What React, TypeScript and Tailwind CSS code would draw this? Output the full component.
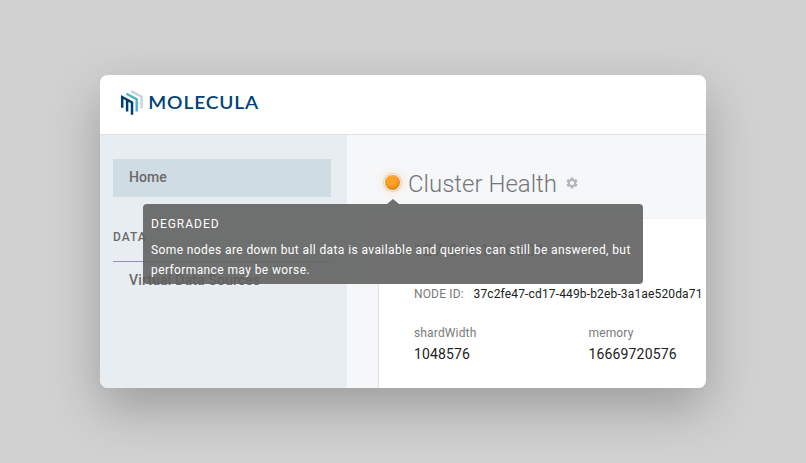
function Logo() {
  return (
    <svg width="140" height="28" viewBox="0 0 140 28" aria-label="Molecula">
      <g fill="none" strokeWidth="2.4">
        <path d="M11.3 2.1 L21.6 7.6 V19.4" stroke="#c5d3dc" />
        <path d="M6.4 4.8 L16.7 10.2 V22.6" stroke="#4ab3c8" />
        <path d="M2.2 18.8 V8 L12 13.4 V25.7 M7.1 10.7 V22.4" stroke="#003d73" strokeWidth="2.5" />
      </g>
      <text
        x="28.3"
        y="20.2"
        textLength="110.8"
        lengthAdjust="spacingAndGlyphs"
        className="fill-[#00427a] font-['Lato',sans-serif] text-[18px] font-semibold tracking-[0.8px]"
      >
        MOLECULA
      </text>
    </svg>
  );
}

function Gear() {
  return (
    <svg width="14" height="14" viewBox="0 0 24 24" fill="#b4b6b8">
      <path d="M19.14 12.94c.04-.3.06-.61.06-.94 0-.32-.02-.64-.07-.94l2.03-1.58c.18-.14.23-.41.12-.61l-1.92-3.32c-.12-.22-.37-.29-.59-.22l-2.39.96c-.5-.38-1.03-.7-1.62-.94L14.4 2.81c-.04-.24-.24-.41-.48-.41h-3.84c-.24 0-.43.17-.47.41l-.36 2.54c-.59.24-1.13.57-1.62.94l-2.39-.96c-.22-.08-.47 0-.59.22L2.74 8.87c-.12.21-.08.47.12.61l2.03 1.58c-.05.3-.09.63-.09.94s.02.64.07.94l-2.03 1.58c-.18.14-.23.41-.12.61l1.92 3.32c.12.22.37.29.59.22l2.39-.96c.5.38 1.03.7 1.62.94l.36 2.54c.05.24.24.41.48.41h3.84c.24 0 .44-.17.47-.41l.36-2.54c.59-.24 1.13-.56 1.62-.94l2.39.96c.22.08.47 0 .59-.22l1.92-3.32c.12-.22.07-.47-.12-.61l-2.01-1.58zM12 15.6c-1.98 0-3.6-1.62-3.6-3.6s1.62-3.6 3.6-3.6 3.6 1.62 3.6 3.6-1.62 3.6-3.6 3.6z" />
    </svg>
  );
}

function Stat({ label, value }: { label: string; value: string }) {
  return (
    <div className="w-[174.5px] shrink-0">
      <div className="text-xs leading-5 tracking-[0.15px] text-[#7a7a7a]">{label}</div>
      <div className="mt-px text-sm leading-5 tracking-[0.15px] text-[#212121]">{value}</div>
    </div>
  );
}

function Tooltip() {
  return (
    <div className="absolute top-[129px] left-[43px] h-20 w-[500px] rounded bg-[#616161]/90 px-2 pt-2.5 text-xs leading-5 text-white">
      <div className="absolute -top-[5px] left-[244px] h-[5px] w-3 bg-[#616161]/90 [clip-path:polygon(50%_0,100%_100%,0_100%)]" />
      <div className="tracking-[1px]">DEGRADED</div>
      <div className="mt-1.5 tracking-[0.4px]">
        Some nodes are down but all data is available and queries can still be answered, but
        <br />
        performance may be worse.
      </div>
    </div>
  );
}

export default function App() {
  return (
    <div className="flex h-[463px] w-[806px] items-start overflow-hidden bg-[#d1d1d1] pt-[75px] pl-[100px] font-['Roboto',sans-serif]">
      <div className="relative h-[313px] w-[606px] rounded-lg shadow-[0_20px_50px_rgba(0,0,0,0.25)]">
        <div className="flex h-full flex-col overflow-hidden rounded-lg bg-white">
          <header className="h-[60px] shrink-0 border-b border-[#dfe1e3] pt-[14px] pl-5">
            <Logo />
          </header>
          <div className="flex min-h-0 flex-1">
            <aside className="w-[247px] shrink-0 bg-[#e8edf1] px-[13px] pt-6 text-[#6a6a6a]">
              <div className="mr-[3px] h-[38px] bg-[#d0dce4] pl-4 text-sm leading-9 font-medium tracking-[0.1px]">
                Home
              </div>
              <div className="mt-[30px] mr-[3px] h-[35px] border-b border-[#47b5c8] text-xs leading-5 font-medium tracking-[1px]">
                DATA
              </div>
              <div className="pt-2 pl-4 text-sm leading-5 font-medium tracking-[0.15px]">Virtual Data Sources</div>
            </aside>
            <main className="flex min-w-0 flex-1 flex-col bg-[#f6f7f9]">
              <div className="flex h-[84px] shrink-0 items-start pt-[34px] pl-[38px]">
                <div className="mt-[6px] h-[15px] w-[15px] rounded-full bg-[radial-gradient(circle_at_42%_32%,#ffa126_35%,#d0760c_100%)] shadow-[0_0_0_1px_#f6f1e9,0_0_0_2px_#ddd3c6,0_0_8px_2px_#fbe0b8]" />
                <h1 className="ml-2 text-2xl leading-[30px] font-light text-[#737579]">Cluster Health</h1>
                <div className="mt-[7px] ml-2">
                  <Gear />
                </div>
              </div>
              <section className="ml-8 flex-1 bg-white pt-[22px] pl-[35px] shadow-[0_1px_2px_rgba(0,0,0,0.25)]">
                <div className="-ml-[18px] flex h-5 items-center text-base text-[#616161]">
                  <span className="mr-[9px] h-2 w-2 rounded-full bg-[#2ea45b]" />
                  <span className="tracking-[1.2px]">127.0.0.1:10101</span>
                </div>
                <div className="mt-[23px] flex text-xs leading-5 whitespace-nowrap">
                  <span className="w-[59.5px] shrink-0 tracking-[0.15px] text-[#7a7a7a]">NODE ID:</span>
                  <span className="tracking-[0.15px] text-[#212121]">37c2fe47-cd17-449b-b2eb-3a1ae520da71</span>
                </div>
                <div className="mt-[19px] flex">
                  <Stat label="shardWidth" value="1048576" />
                  <Stat label="memory" value="16669720576" />
                </div>
              </section>
            </main>
          </div>
        </div>
        <Tooltip />
      </div>
    </div>
  );
}
